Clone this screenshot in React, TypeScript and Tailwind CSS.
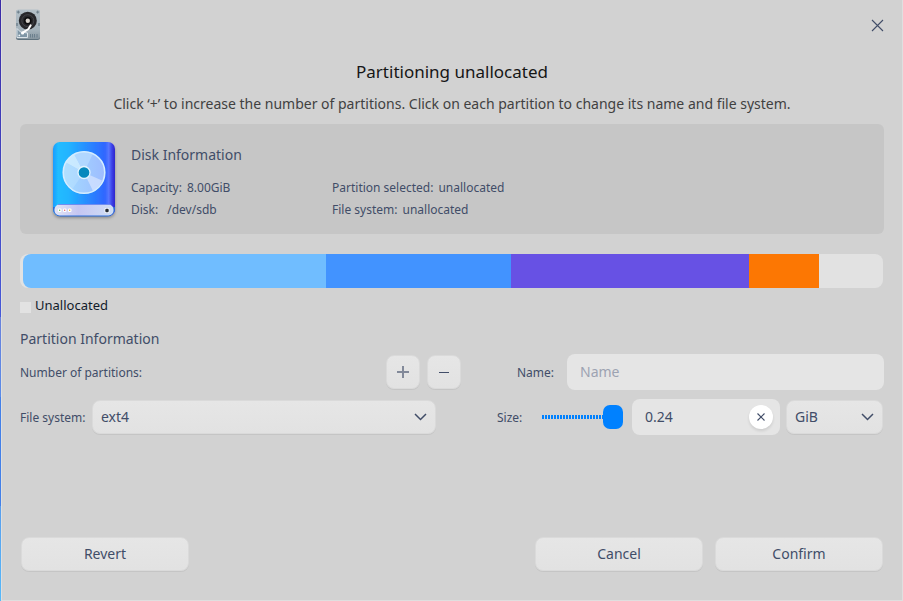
import React from "react";

const FONT = "font-['Noto_Sans','Open_Sans',sans-serif]";
const FACE =
  "rounded-lg bg-linear-to-b from-[#e6e6e6] to-[#e2e2e2] border border-[#dadada] shadow-[0_1px_0_rgba(0,0,0,0.06)]";

function HardDiskIcon() {
  return (
    <svg width="26" height="32" viewBox="0 0 26 32">
      <defs>
        <linearGradient id="hd" x1="0" y1="0" x2="0" y2="1">
          <stop offset="0" stopColor="#b4c0c8" />
          <stop offset="0.7" stopColor="#a3b1ba" />
          <stop offset="1" stopColor="#8796a0" />
        </linearGradient>
      </defs>
      <rect x="1" y="1" width="24" height="30" rx="2.5" fill="#5e717d" />
      <rect x="1" y="0.5" width="24" height="29.5" rx="2.5" fill="url(#hd)" />
      <path d="M3.3 1.6v3M1.8 3.1h3M22.7 1.6v3M21.2 3.1h3" stroke="#6b7c88" strokeWidth="1" />
      <path d="M1 14h2v3H1zM23 14h2v3h-2z" fill="#80909b" />
      <circle cx="12.8" cy="11.7" r="9" fill="#27272b" />
      <circle cx="12.8" cy="11.7" r="6" fill="none" stroke="#45454a" strokeWidth="1" />
      <circle cx="12.8" cy="11.7" r="3.8" fill="#0c0c0e" />
      <circle cx="12.8" cy="11.7" r="2.2" fill="#d9d4ce" />
      <path d="M2 19.5l3.500 3.500 7 1v4.500H2z" fill="#7f96a6" stroke="#e4ebf0" strokeWidth="0.9" />
      <path d="M15.6 16.4L13.500 20L7.800 23.600" fill="none" stroke="#fff" strokeWidth="2" strokeLinecap="round" strokeLinejoin="round" />
      <circle cx="7.6" cy="24" r="1.6" fill="#fff" />
      <circle cx="4.3" cy="26.4" r="0.9" fill="#eef3f6" />
      <path d="M15.500 25v3.5M17.500 25v3.5M19.500 25v3.5M22 25v3.5" stroke="#6b7f8d" strokeWidth="1" />
    </svg>
  );
}

function DriveIcon() {
  return (
    <svg width="68" height="84" viewBox="0 0 68 84">
      <defs>
        <linearGradient id="body" x1="0" y1="0" x2="1" y2="0">
          <stop offset="0" stopColor="#1a9bff" />
          <stop offset="0.08" stopColor="#20bcff" />
          <stop offset="0.25" stopColor="#20b4ff" />
          <stop offset="0.6" stopColor="#2a85ff" />
          <stop offset="0.84" stopColor="#3066ff" />
          <stop offset="0.9" stopColor="#5878ff" />
          <stop offset="0.95" stopColor="#3c41e8" />
          <stop offset="1" stopColor="#2f25cc" />
        </linearGradient>
        <linearGradient id="disc" x1="0" y1="0" x2="1" y2="0">
          <stop offset="0" stopColor="#a4dcff" />
          <stop offset="1" stopColor="#9ebcff" />
        </linearGradient>
        <linearGradient id="tray" x1="0" y1="0" x2="1" y2="0">
          <stop offset="0" stopColor="#e2e5f5" />
          <stop offset="0.4" stopColor="#c5c6f2" />
          <stop offset="1" stopColor="#cfdef5" />
        </linearGradient>
        <filter id="shade" x="-20%" y="-20%" width="140%" height="140%">
          <feDropShadow dx="0" dy="2" stdDeviation="1.5" floodColor="#000" floodOpacity="0.3" />
        </filter>
      </defs>
      <rect x="3" y="2" width="62" height="74" rx="7" fill="url(#body)" filter="url(#shade)" />
      <path d="M3 67V69a7.500 7.500 0 0 0 7.500 7.500h47a7.500 7.500 0 0 0 7.500-7.500V67z" fill="#2b6cd9" />
      <circle cx="34" cy="33" r="21.500" fill="#1686ef" opacity="0.5" />
      <circle cx="34" cy="32.500" r="21" fill="url(#disc)" />
      <path d="M34 32.500L16 22.500A21 21 0 0 1 24 14z" fill="#d3efff" opacity="0.8" />
      <path d="M34 32.500L16 22.500A21 21 0 0 0 22 49.500z" fill="#c3e7ff" opacity="0.4" />
      <path d="M34 32.500L52 40.500A21 21 0 0 1 43 51z" fill="#d8e6ff" opacity="0.7" />
      <path d="M34 32.500L24 14A21 21 0 0 1 43 13.500z" fill="#b8dcff" opacity="0.7" />
      <circle cx="34" cy="32.500" r="20.800" fill="none" stroke="#d4edff" strokeWidth="1.600" />
      <circle cx="34" cy="32.500" r="6" fill="#0788bd" stroke="#e3f4ff" strokeWidth="1.300" />
      <rect x="4.500" y="64.500" width="59" height="11" rx="5" fill="url(#tray)" />
      <path d="M8 64.500h52" stroke="#6f8cf1" strokeWidth="1" />
      <rect x="8" y="68.500" width="3.500" height="3.500" rx="1" fill="#fff" />
      <rect x="13" y="68.500" width="3.500" height="3.500" rx="1" fill="#fff" />
      <rect x="18" y="68.500" width="3.500" height="3.500" rx="1" fill="#fff" />
      <circle cx="9.700" cy="70.300" r="0.700" fill="#55bd46" />
      <circle cx="14.700" cy="70.300" r="0.700" fill="#e65a68" />
      <circle cx="19.700" cy="70.300" r="0.700" fill="#dfb42b" />
      <rect x="54.500" y="68" width="5" height="5" rx="1.300" fill="#f1f5fb" />
      <rect x="55.300" y="68.800" width="3.400" height="3.400" rx="1.300" fill="#252b35" />
    </svg>
  );
}

function Chevron() {
  return (
    <svg width="14" height="10" viewBox="0 0 14 10" fill="none" stroke="#414d68" strokeWidth="1.5">
      <path d="M2 2L7.500 7.500L13 2" />
    </svg>
  );
}

const SEGMENTS = [
  { width: "w-[303px]", color: "bg-[#70bdff]" },
  { width: "w-[185px]", color: "bg-[#4293ff]" },
  { width: "w-[238px]", color: "bg-[#6751e4]" },
  { width: "w-[70px]", color: "bg-[#fc7703]" },
];

export default function App() {
  return (
    <div className={`flex h-[601px] w-[903px] overflow-hidden bg-[#d2d2d2] text-[#414d68] ${FONT}`}>
      <div className="flex w-px shrink-0 flex-col">
        <div className="h-[317px] bg-linear-to-b from-[#3b2ba6] to-[#4659d8]" />
        <div className="h-[80px] bg-linear-to-b from-[#6982dc] to-[#5a8be8]" />
        <div className="h-[109px] bg-[#4380e8]" />
        <div className="flex-1 bg-linear-to-b from-[#599eed] to-[#56b9fa]" />
      </div>
      <div className="flex w-[902px] flex-col border-x border-b border-[#dfdfdf] px-[18px]">
        <header className="-ml-[5px] flex h-[50px] items-center justify-between">
          <HardDiskIcon />
          <svg width="13" height="13" viewBox="0 0 13 13" fill="none" stroke="#414d68" strokeWidth="1.100">
            <path d="M1 1L12 12M12 1L1 12" />
          </svg>
        </header>
        <h1 className="mt-[10px] h-6 text-center text-[17px] leading-6 text-[#161616]">Partitioning unallocated</h1>
        <p className="mt-[10px] h-5 text-center text-[14px] leading-5 text-[#414141]">
          Click ‘+’ to increase the number of partitions. Click on each partition to change its name and file system.
        </p>
        <section className="mt-[10px] flex h-[110px] w-[864px] rounded-[6px] bg-[#c6c6c6] pt-4 pl-[30px] text-[12px] leading-[22px]">
          <DriveIcon />
          <div className="ml-[13px] w-[201px]">
            <h2 className="mt-[4px] text-[14px] leading-[22px]">Disk Information</h2>
            <div className="mt-[11px] flex gap-[5px]"><span>Capacity:</span><span>8.00GiB</span></div>
            <div className="flex gap-[9px]"><span>Disk:</span><span>/dev/sdb</span></div>
          </div>
          <div className="pt-[37px]">
            <div className="flex gap-[5px]"><span>Partition selected:</span><span>unallocated</span></div>
            <div className="flex gap-[5px]"><span>File system:</span><span>unallocated</span></div>
          </div>
        </section>
        <div className="mt-5 flex h-[34px] w-[863px] overflow-hidden rounded-lg bg-[#e2e2e2] pl-[3px]">
          {SEGMENTS.map((s) => (
            <div key={s.color} className={`${s.width} ${s.color} first:rounded-l-lg`} />
          ))}
        </div>
        <div className="mt-2 flex h-5 items-center gap-[4px] text-[13px] text-[#111b2b]">
          <span className="mt-[3px] size-[11px] bg-[#e2e2e2]" />
          <span>Unallocated</span>
        </div>
        <h2 className="mt-[13px] h-5 text-[14px] leading-5">Partition Information</h2>
        <div className="mt-[5px] flex h-9 items-center text-[12px]">
          <span className="w-[366px] pt-[2px]">Number of partitions:</span>
          <button className={`flex size-[34px] items-center justify-center ${FACE}`}>
            <svg width="14" height="14" viewBox="0 0 14 14"><path d="M1 7h12M7 1v12" stroke="#414d68" strokeOpacity="0.6" strokeWidth="2" /></svg>
          </button>
          <button className={`ml-[7px] flex size-[34px] items-center justify-center ${FACE}`}>
            <svg width="12" height="12" viewBox="0 0 12 12"><path d="M1 6.500h10" stroke="#414d68" strokeWidth="1" /></svg>
          </button>
          <span className="ml-14 w-[50px] pt-[2px]">Name:</span>
          <div className="flex h-9 w-[317px] items-center rounded-lg bg-[#e5e5e5] pb-[2px] pl-[13px] text-[14px] text-[#9da3b2]">Name</div>
        </div>
        <div className="mt-[9px] flex h-9 items-center text-[12px]">
          <span className="w-[72px] pt-[2px]">File system:</span>
          <div className={`flex h-[34px] w-[344px] items-center justify-between pr-2 pl-2 text-[14px] ${FACE}`}>
            <span className="pb-[2px]">ext4</span>
            <Chevron />
          </div>
          <span className="ml-[61px] w-[45px] pt-[2px]">Size:</span>
          <div className="flex w-[82px] items-center">
            <span className="h-1 w-[61px] bg-[repeating-linear-gradient(90deg,#0081ff_0_2px,transparent_2px_3px)]" />
            <span className="h-6 w-5 rounded-[7px] bg-[#0081ff]" />
          </div>
          <div className="ml-[8px] flex h-9 w-[148px] items-center justify-between rounded-lg bg-[#e5e5e5] pr-[7px] pl-[13px] text-[14px]">
            <span className="pb-[2px]">0.24</span>
            <span className="flex size-6 items-center justify-center rounded-full bg-white shadow-[0_2px_3px_rgba(0,0,0,0.1)]">
              <svg width="8" height="8" viewBox="0 0 8 8" stroke="#414d68" strokeWidth="1.100"><path d="M0.500 0.500L7.500 7.500M7.500 0.500L0.500 7.500" /></svg>
            </span>
          </div>
          <div className={`ml-[6px] flex h-[34px] w-[97px] items-center justify-between pr-2 pl-2 text-[14px] ${FACE}`}>
            <span className="pb-[2px]">GiB</span>
            <Chevron />
          </div>
        </div>
        <footer className="mt-[102px] flex text-[14px]">
          <button className={`ml-px h-[34px] w-[168px] pb-[2px] ${FACE}`}>Revert</button>
          <button className={`ml-[346px] h-[34px] w-[168px] pb-[2px] ${FACE}`}>Cancel</button>
          <button className={`ml-[12px] h-[34px] w-[168px] pb-[2px] ${FACE}`}>Confirm</button>
        </footer>
      </div>
    </div>
  );
}
